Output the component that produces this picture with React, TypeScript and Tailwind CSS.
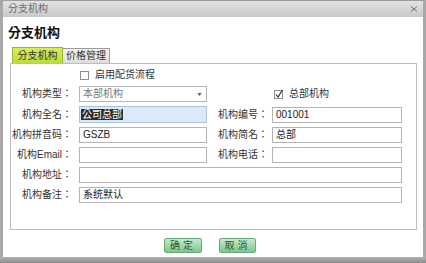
import React from "react";

const font = "font-['Liberation_Sans','Noto_Sans_CJK_TC',sans-serif]";

const Label = ({ text, w = "w-[61px]" }: { text: string; w?: string }) => (
  <div className={`${w} shrink-0 text-right text-[10px] leading-[16px] text-[#333]`}>{text}</div>
);

const Input = ({ value, w, children }: { value?: string; w: string; children?: React.ReactNode }) => (
  <div className={`${w} h-[16px] shrink-0 border border-[#b4b4b4] bg-white px-[3px] text-[10px] leading-[14px] text-[#222]`}>
    {children ?? value}
  </div>
);

const CheckBox = ({ checked }: { checked?: boolean }) => (
  <div className="relative h-[9px] w-[9px] border border-[#8e8e8e] bg-white">
    {checked && (
      <svg viewBox="0 0 10 10" className="absolute -left-[1px] -top-[2px] h-[10px] w-[10px]">
        <path d="M2 5.5 L4 8 L8.5 1" fill="none" stroke="#333" strokeWidth="1.2" />
      </svg>
    )}
  </div>
);

export default function App() {
  return (
    <div className={`${font} flex h-[263px] w-[426px] flex-col overflow-hidden bg-white`}>
      <div className="flex flex-1 flex-col border-x-[3px] border-[#a8a8a8]">
        {/* title bar */}
        <div className="flex h-[17px] shrink-0 items-center justify-between border-t border-[#9c9c9c] bg-gradient-to-b from-[#e2e2e2] to-[#c9c9c9] pl-[5px] pr-[5px]">
          <span className="text-[10px] leading-[12px] text-[#6e6e6e]">分支机构</span>
          <svg viewBox="0 0 8 6" className="h-[6px] w-[8px]">
            <path d="M1 0.5 L4 3 L7 0.5 M1 5.5 L4 3 L7 5.5" fill="none" stroke="#666" strokeWidth="0.9" />
          </svg>
        </div>

        <div className="pl-[5px] pt-[9px] text-[13px] font-bold leading-[14px] text-[#111]">分支机构</div>

        {/* tabs */}
        <div className="ml-[9px] mt-[7px] flex items-end">
          <div className="flex h-[16px] w-[51px] items-center justify-center border border-b-0 border-[#9bb23a] bg-gradient-to-b from-[#d6ef58] to-[#bcdc3a] text-[10px] leading-[12px] text-[#333]">
            分支机构
          </div>
          <div className="flex h-[15px] w-[47px] items-center justify-center border border-b-0 border-l-0 border-[#9a9a9a] bg-gradient-to-b from-[#f2f2f2] to-[#dedede] text-[10px] leading-[12px] text-[#333]">
            价格管理
          </div>
        </div>

        {/* panel */}
        <div className="ml-[7px] mr-[6px] flex h-[167px] flex-col border border-[#bdbdbd] pt-[3px]">
          <div className="flex h-[16px] items-center gap-[6px] pl-[69px]">
            <CheckBox />
            <span className="text-[10px] leading-[12px] text-[#333]">启用配货流程</span>
          </div>

          <div className="mt-[3px] flex flex-col gap-[4px]">
            <div className="flex items-center">
              <Label text="机构类型：" />
              <div className="ml-[7px] flex h-[16px] w-[128px] items-center justify-between border border-[#b4b4b4] bg-white pl-[3px] pr-[4px]">
                <span className="text-[10px] leading-[14px] text-[#777]">本部机构</span>
                <svg viewBox="0 0 6 4" className="h-[3px] w-[5px]">
                  <path d="M0 0 L6 0 L3 4 Z" fill="#666" />
                </svg>
              </div>
              <div className="ml-[67px] flex items-center gap-[6px]">
                <CheckBox checked />
                <span className="text-[10px] leading-[12px] text-[#333]">总部机构</span>
              </div>
            </div>

            <div className="flex items-center">
              <Label text="机构全名：" />
              <div className="ml-[7px] h-[17px] w-[128px] shrink-0 border border-[#a9c3dc] bg-[#dce9f6] px-[1px] pt-[1px] text-[10px] leading-[13px]">
                <span className="bg-[#2e2e2e] px-[1px] text-white">公司总部</span>
              </div>
              <Label text="机构编号：" />
              <div className="ml-[4px]">
                <Input w="w-[130px]" value="001001" />
              </div>
            </div>

            <div className="flex items-center">
              <Label text="机构拼音码：" />
              <div className="ml-[7px]">
                <Input w="w-[128px]" value="GSZB" />
              </div>
              <Label text="机构简名：" />
              <div className="ml-[4px]">
                <Input w="w-[130px]" value="总部" />
              </div>
            </div>

            <div className="flex items-center">
              <Label text="机构Email：" />
              <div className="ml-[7px]">
                <Input w="w-[128px]" />
              </div>
              <Label text="机构电话：" />
              <div className="ml-[4px]">
                <Input w="w-[130px]" />
              </div>
            </div>

            <div className="flex items-center">
              <Label text="机构地址：" />
              <div className="ml-[7px]">
                <Input w="w-[323px]" />
              </div>
            </div>

            <div className="flex items-center">
              <Label text="机构备注：" />
              <div className="ml-[7px]">
                <Input w="w-[323px]" value="系统默认" />
              </div>
            </div>
          </div>
        </div>

        {/* buttons */}
        <div className="mt-[8px] flex justify-center gap-[17px] pr-[6px]">
          <div className="flex h-[15px] w-[38px] items-center justify-center rounded-[2px] border border-[#6aa879] bg-gradient-to-b from-[#c4ecc8] to-[#7cc690] text-[10px] leading-[12px] tracking-[3px] text-[#2d5d2f]">
            确定
          </div>
          <div className="flex h-[15px] w-[37px] items-center justify-center rounded-[2px] border border-[#6aa879] bg-gradient-to-b from-[#c4ecc8] to-[#7cc690] text-[10px] leading-[12px] tracking-[3px] text-[#2d5d2f]">
            取消
          </div>
        </div>
      </div>
      <div className="h-[6px] shrink-0 bg-gradient-to-b from-[#b0b0b0] to-[#8e8e8e]" />
    </div>
  );
}
